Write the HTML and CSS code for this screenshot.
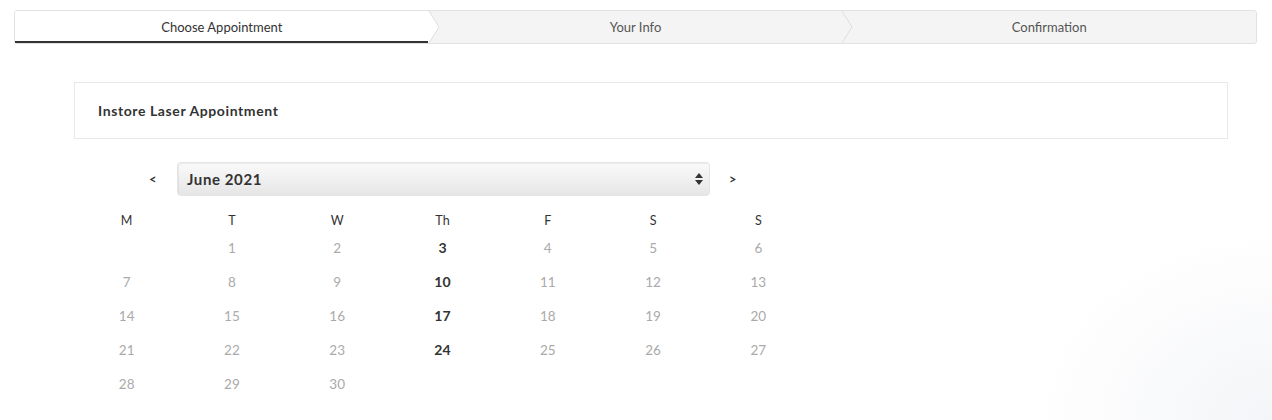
FILE: index.html
```html
<!DOCTYPE html>
<html>
<head>
<meta charset="utf-8">
<link rel="stylesheet" href="styles.css">
</head>
<body>
<div class="page">
  <div class="steps">
    <div class="step active">
      <span>Choose Appointment</span>
      <svg class="chev" viewBox="0 0 11 32" preserveAspectRatio="none"><polygon points="0,0 1,0 11,16 1,32 0,32" class="fillw"/><polyline points="1,0 11,16 1,32" class="line"/></svg>
    </div>
    <div class="step">
      <span>Your Info</span>
      <svg class="chev" viewBox="0 0 11 32" preserveAspectRatio="none"><polygon points="0,0 1,0 11,16 1,32 0,32" class="fillg"/><polyline points="1,0 11,16 1,32" class="line"/></svg>
    </div>
    <div class="step">
      <span>Confirmation</span>
    </div>
  </div>

  <div class="card">Instore Laser Appointment</div>

  <div class="calendar">
    <div class="month-row">
      <span class="nav prev">&lt;</span>
      <div class="select">
        <span>June 2021</span>
        <svg class="updown" width="8" height="12" viewBox="0 0 8 12"><polygon points="4,0 8,5 0,5" /><polygon points="0,7 8,7 4,12"/></svg>
      </div>
      <span class="nav next">&gt;</span>
    </div>
    <div class="grid">
      <div class="hd">M</div><div class="hd">T</div><div class="hd">W</div><div class="hd">Th</div><div class="hd">F</div><div class="hd">S</div><div class="hd">S</div>
      <div class="d"></div><div class="d">1</div><div class="d">2</div><div class="d on">3</div><div class="d">4</div><div class="d">5</div><div class="d">6</div>
      <div class="d">7</div><div class="d">8</div><div class="d">9</div><div class="d on">10</div><div class="d">11</div><div class="d">12</div><div class="d">13</div>
      <div class="d">14</div><div class="d">15</div><div class="d">16</div><div class="d on">17</div><div class="d">18</div><div class="d">19</div><div class="d">20</div>
      <div class="d">21</div><div class="d">22</div><div class="d">23</div><div class="d on">24</div><div class="d">25</div><div class="d">26</div><div class="d">27</div>
      <div class="d">28</div><div class="d">29</div><div class="d">30</div><div class="d"></div><div class="d"></div><div class="d"></div><div class="d"></div>
    </div>
  </div>
</div>
</body>
</html>
```

FILE: styles.css
```css
* { box-sizing: border-box; }
html, body { margin: 0; height: 100%; }
body {
  font-family: "Lato", "Noto Sans", sans-serif;
  color: #333;
  background: radial-gradient(ellipse 240px 190px at 100% 100%, #f4f5f8 0%, #ffffff 100%);
  background-color: #fff;
  width: 1272px;
  height: 420px;
  overflow: hidden;
}
.page { padding: 10px 15px 0 14px; }

.steps {
  display: flex;
  height: 34px;
  border: 1px solid #e2e2e2;
  border-radius: 3px;
  background: #f4f4f4;
}
.step {
  flex: 1;
  position: relative;
  display: flex;
  align-items: center;
  justify-content: center;
  font-size: 13px;
  color: #555;
}
.step span { margin-top: -1px; }
.step.active {
  background: #fff;
  color: #333;
  border-bottom: 2px solid #333;
  border-radius: 2px 0 0 0;
}
.step.active span { margin-top: 1px; }
.chev {
  position: absolute;
  top: 0;
  right: -10px;
  width: 11px;
  height: 32px;
  z-index: 2;
}
.fillw { fill: #fff; }
.fillg { fill: #f4f4f4; }
.line { fill: none; stroke: #dedede; stroke-width: 1; vector-effect: non-scaling-stroke; }

.card {
  margin: 38px 29px 0 60px;
  height: 57px;
  border: 1px solid #e8e8e8;
  padding: 0 23px;
  display: flex;
  align-items: center;
  font-size: 14px;
  font-weight: 700;
  letter-spacing: 0.6px;
  color: #333;
}

.calendar { margin: 23px 0 0 60px; width: 737px; }
.month-row {
  display: flex;
  align-items: center;
  height: 34px;
}
.nav {
  font-size: 13px;
  font-weight: 700;
  color: #333;
}
.prev { margin-left: 75px; width: 28px; }
.next { margin-left: 19px; }
.select {
  width: 533px;
  height: 34px;
  border-radius: 4px;
  border: 1px solid #e4e4e4;
  background: linear-gradient(#fafafa, #e6e6e6);
  box-shadow: inset 1px 1px 1px rgba(0,0,0,0.06);
  display: flex;
  align-items: center;
  justify-content: space-between;
  padding: 0 6px 0 9px;
  font-size: 15px;
  font-weight: 700;
  letter-spacing: 0.6px;
  color: #333;
}
.updown { fill: #333; }

.grid {
  display: grid;
  grid-template-columns: repeat(7, 1fr);
  margin-top: 14px;
}
.hd {
  text-align: center;
  font-size: 12.5px;
  color: #333;
  height: 22px;
  line-height: 22px;
}
.d {
  text-align: center;
  font-size: 13.5px;
  color: #aaa;
  height: 34px;
  line-height: 32px;
}
.d.on { color: #333; font-weight: 700; font-size: 14px; }
```
